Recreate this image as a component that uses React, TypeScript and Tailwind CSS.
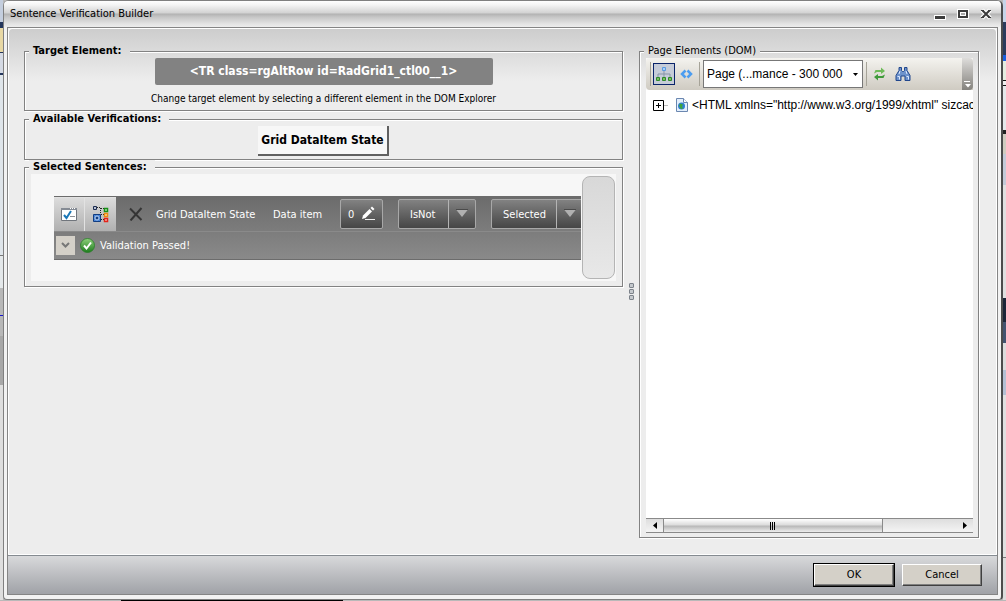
import { useState } from "react";
import type { ReactNode } from "react";
import clsx from "clsx";

function Group({
  title,
  legendClass = "pr-2 font-bold",
  className,
  children,
}: {
  title: string;
  legendClass?: string;
  className?: string;
  children: ReactNode;
}) {
  return (
    <fieldset
      className={clsx(
        "min-w-0 border border-[#828282] shadow-[1px_1px_0_#fff,inset_1px_1px_0_#fff]",
        className
      )}
    >
      <legend className={clsx("ml-1 bg-[#ededed] pl-1 text-[11px] leading-[14px]", legendClass)}>
        {title}
      </legend>
      {children}
    </fieldset>
  );
}

function TitleBar() {
  const button = "flex h-3 w-3 items-center justify-center";
  return (
    <header className="flex h-[26px] shrink-0 items-center justify-between rounded-t bg-[linear-gradient(#fff_0px,#f4f4f4_4px,#d2d2d2_12px,#b2b2b2_13px,#c6c6c6_16px,#e4e4e4_23px,#ededed_26px)] pr-[9px] pl-[6px]">
      <h1 className="pt-px text-[11px]">Sentence Verification Builder</h1>
      <div className="flex gap-[11px]">
        <button type="button" aria-label="Minimize" className={button}>
          <svg width="12" height="12" viewBox="0 0 12 12">
            <path d="M0 7h12v5H0z" fill="#fff" />
            <path d="M1 8h10v3H1z" fill="#3c3c3c" />
          </svg>
        </button>
        <button type="button" aria-label="Maximize" className={button}>
          <svg width="12" height="12" viewBox="0 0 12 12">
            <path d="M0 1h12v10H0z" fill="#fff" />
            <path d="M1 2h10v8H1z" fill="#3c3c3c" />
            <path d="M3 4h6v4H3z" fill="#fff" />
            <path d="M4 5h4v2H4z" fill="#aaa" />
          </svg>
        </button>
        <button type="button" aria-label="Close" className={button}>
          <svg width="12" height="12" viewBox="0 0 12 12">
            <path d="M2 2l8 8m0-8l-8 8" stroke="#fff" strokeWidth="4.500" />
            <path d="M2.500 2.500l7 7m0-7l-7 7" stroke="#3c3c3c" strokeWidth="2" />
            <path d="M1 2.500h3m4 0h3M1 9.500h3m4 0h3" stroke="#3c3c3c" />
          </svg>
        </button>
      </div>
    </header>
  );
}

function CheckWindowIcon() {
  return (
    <svg width="18" height="14" viewBox="0 0 18 14">
      <path d="M1.500 1.500h15v12h-15z" fill="#fff" stroke="#70757c" />
      <path d="M1 1h16v2H1z" fill="#858b94" />
      <path d="M10 1.500h1m1 0h1m1 0h1" stroke="#fff" />
      <path d="M4 8l2.500 3L11 4" fill="none" stroke="#1b78b8" strokeWidth="2" />
      <path d="M10 9.500h5" stroke="#8a8f96" />
    </svg>
  );
}

function BlocksIcon() {
  return (
    <svg width="17" height="18" viewBox="0 0 17 18">
      <path
        d="M5 2.500h3M8.500 3v5M9 3.500h3M9 9.500h3M9 14.500h3"
        stroke="#222"
        strokeDasharray="1 1"
        fill="none"
      />
      <path d="M1.500 1.500h3v3h-3z" fill="#b9c2d4" stroke="#1c2c50" />
      <path d="M1.500 9.500h7v7h-7z" fill="#4a86d8" stroke="#123d80" />
      <circle cx="5" cy="13" r="2" fill="#123d80" stroke="#bcd4f4" />
      <path d="M12.500 3.500h3v3h-3z" fill="#d4ecc8" stroke="#159015" strokeWidth="1.500" />
      <path d="M12.500 8.500h3v3h-3z" fill="#fce2b8" stroke="#ee8a10" strokeWidth="1.500" />
      <path d="M12.500 13.500h3v3h-3z" fill="#fbc9c4" stroke="#e2231a" strokeWidth="1.500" />
    </svg>
  );
}

function ToolSelect({
  label,
  options,
  className,
}: {
  label: string;
  options: string[];
  className: string;
}) {
  return (
    <div
      className={clsx(
        "relative flex h-[30px] shrink-0 rounded-xs border border-[#a8a8a8] bg-linear-to-b from-[#828282] to-[#464646]",
        className
      )}
    >
      <select
        aria-label={label}
        className="w-full appearance-none pt-1 pl-[11px] text-[11px] text-white outline-none"
      >
        {options.map((option) => (
          <option key={option}>{option}</option>
        ))}
      </select>
      <span className="pointer-events-none absolute inset-y-0 right-0 flex w-[27px] items-start justify-center border-l border-[#b4b4b4] pt-[9px]">
        <svg width="12" height="9" viewBox="0 0 12 9">
          <path d="M0 .5h12L6 8z" fill="#b0b0b0" />
          <path d="M0 .5h12" stroke="#4a4a4a" />
        </svg>
      </span>
    </div>
  );
}

function Sentence() {
  const tile =
    "flex h-full w-[31px] shrink-0 items-center justify-center border-t border-[#e2e2e2] bg-linear-to-b from-[#dcdcdc] to-[#b0b0b0]";
  return (
    <div className="min-w-0 flex-1 self-center overflow-hidden border-y border-[#6c6c6c] bg-linear-to-b from-[#6c6c6c] to-[#8a8a8a] text-[11px] text-white">
      <div className="flex h-[35px] items-center border-b border-[#8a8a8a]">
        <button type="button" aria-label="Verification" className={clsx(tile, "border-r")}>
          <CheckWindowIcon />
        </button>
        <button type="button" aria-label="Element" className={tile}>
          <BlocksIcon />
        </button>
        <button type="button" aria-label="Remove" className="ml-[13px] shrink-0">
          <svg width="14" height="14" viewBox="0 0 14 14">
            <path d="M1 1.500L12.500 13M12.500 1L1.500 13.500" stroke="#353535" strokeWidth="2" />
          </svg>
        </button>
        <span className="ml-[13px] w-[117px] shrink-0 pt-1 whitespace-nowrap">
          Grid DataItem State
        </span>
        <span className="w-[67px] shrink-0 pt-1 whitespace-nowrap">Data item</span>
        <button
          type="button"
          className="flex h-[30px] w-[43px] shrink-0 items-center justify-between rounded-xs border border-[#a8a8a8] bg-linear-to-b from-[#828282] to-[#464646] px-[7px]"
        >
          <span className="pt-1">0</span>
          <svg width="14" height="15" viewBox="0 0 14 15">
            <path d="M1 13l1-3.500L8.500 3 11 5.500 4.500 12z" fill="#fff" />
            <path d="M9.500 2l1.500-1.500L13.500 3 12 4.500z" fill="#fff" />
            <path d="M4 13.500h10" stroke="#eee" />
          </svg>
        </button>
        <ToolSelect label="Operator" options={["IsNot", "Is"]} className="ml-[15px] w-[78px]" />
        <ToolSelect label="State" options={["Selected", "Edited"]} className="ml-[15px] w-[93px]" />
      </div>
      <div className="flex h-[27px] items-center gap-[5px] pl-[2px]">
        <button
          type="button"
          aria-label="Details"
          className="flex h-[19px] w-[19px] items-center justify-center bg-[#d4d0c8]"
        >
          <svg width="9" height="6" viewBox="0 0 9 6">
            <path d="M1 1l3.500 3.500L8 1" fill="none" stroke="#777" strokeWidth="2" />
          </svg>
        </button>
        <svg width="15" height="15" viewBox="0 0 15 15">
          <defs>
            <linearGradient id="pass" x1="0" y1="0" x2="0" y2="1">
              <stop offset="0" stopColor="#8fd07c" />
              <stop offset="1" stopColor="#1d7c1d" />
            </linearGradient>
          </defs>
          <circle cx="7.500" cy="7.500" r="7" fill="url(#pass)" stroke="#2a7d28" strokeWidth=".8" />
          <path d="M4 7.500l2.500 3L11 4.500" fill="none" stroke="#fff" strokeWidth="2" />
        </svg>
        <span className="pt-[3px]">Validation Passed!</span>
      </div>
    </div>
  );
}

function DomToolbar() {
  return (
    <div className="flex h-8 items-center rounded-l bg-linear-to-b from-[#f4f3ef] to-[#cfcbc2] pl-1">
      <span className="h-6 w-px bg-[#a6a398]" />
      <button
        type="button"
        aria-label="Tree view"
        className="ml-[2px] flex h-[22px] w-[22px] shrink-0 items-center justify-center border border-[#0a246a] bg-[#c6ccd8]"
      >
        <svg width="18" height="16" viewBox="0 0 18 16">
          <path d="M9 5v6M3 11V8h12v3" fill="none" stroke="#8795a8" />
          <path d="M7.500 1.500h3v3h-3z" fill="#a8d0fa" stroke="#5a9ae0" />
          <path
            d="M1.500 11.500h3v3h-3zM7.500 11.500h3v3h-3zM13.500 11.500h3v3h-3z"
            fill="#7ac060"
            stroke="#2e8a2a"
          />
        </svg>
      </button>
      <button type="button" aria-label="Markup view" className="ml-[5px]">
        <svg width="13" height="10" viewBox="0 0 13 10">
          <path d="M5.500 1.500L2 5l3.500 3.500M7.500 1.500L11 5 7.500 8.500" fill="none" stroke="#4c9df0" strokeWidth="2.500" />
        </svg>
      </button>
      <span className="ml-[6px] h-6 w-px bg-[#a6a398]" />
      <div className="relative ml-[3px] h-7 w-40 shrink-0">
        <select
          aria-label="Page"
          className="h-full w-full appearance-none border border-[#777] bg-white pr-4 pl-[3px] font-['Liberation_Sans',sans-serif] text-[12px] outline-none"
        >
          <option>Page (...mance - 300 000 </option>
        </select>
        <svg
          width="5"
          height="3"
          viewBox="0 0 5 3"
          className="pointer-events-none absolute top-[13px] right-[5px]"
        >
          <path d="M0 0h5L2.500 3z" />
        </svg>
      </div>
      <span className="ml-[3px] h-6 w-px bg-[#a6a398]" />
      <button type="button" aria-label="Refresh" className="ml-[6px]">
        <svg width="13" height="14" viewBox="0 0 13 14">
          <path d="M1 6.500l1.500-3.500H8V.5L12 4 8 7V5H4z" fill="#6dbb58" />
          <path d="M12 7.500L10.500 11H5v2.500L1 10l4-3v2h4z" fill="#3f9a3a" />
        </svg>
      </button>
      <button type="button" aria-label="Find" className="ml-[9px]">
        <svg width="16" height="14" viewBox="0 0 16 14">
          <path
            d="M4 .5h2.500v3l1 1h1l1-1v-3H12v3l3 5v5h-5V9H6v4.500H1v-5l3-5z"
            fill="#6e93cc"
            stroke="#20468c"
          />
          <path d="M2.500 9.500h2v3m7-3h2v3M5 4L4 7m7-3l1 3" fill="none" stroke="#dce9ff" />
        </svg>
      </button>
      <span className="ml-auto flex h-full w-[11px] items-end justify-center rounded-r bg-linear-to-b from-[#dedddb] to-[#85837e] pb-[2px]">
        <svg width="7" height="7" viewBox="0 0 7 7">
          <path d="M0 .5h6" stroke="#fff" />
          <path d="M1 3h6L4 6.500z" fill="#fff" />
        </svg>
      </span>
    </div>
  );
}

function DomTree() {
  const [open, setOpen] = useState(false);
  return (
    <div className="flex flex-1 items-start overflow-hidden bg-white pt-2 pl-[7px]">
      <button
        type="button"
        aria-label="Expand"
        aria-expanded={open}
        onClick={() => setOpen(!open)}
        className="mt-[2px] shrink-0"
      >
        <svg width="15" height="11" viewBox="0 0 15 11">
          <path d="M.5.5h10v10H.5z" fill="#fff" stroke="#000" />
          <path d={open ? "M3 5.500h5" : "M3 5.500h5M5.500 3v5"} stroke="#000" />
          <path d="M11 5.500h4" stroke="#bbb" />
        </svg>
      </button>
      <svg width="12" height="14" viewBox="0 0 12 14" className="ml-2 shrink-0">
        <path d="M.5.5h7l4 4v9H.5z" fill="#e3effc" stroke="#6b87b0" />
        <path d="M7.500.5v4h4" fill="#fff" stroke="#6b87b0" />
        <circle cx="5.500" cy="8" r="3.500" fill="#2f7fd0" />
        <path d="M4 5.500l3 1-1 2 1 2-2 .5-2-3z" fill="#3ea63a" />
      </svg>
      <span className="ml-1 font-['Liberation_Sans',sans-serif] text-[12px] leading-[15px] whitespace-nowrap">
        {'<HTML xmlns="http://www.w3.org/1999/xhtml" sizcac'}
      </span>
    </div>
  );
}

function HorizontalScrollBar() {
  return (
    <div className="flex h-[15px] shrink-0 border-y border-[#8a8a8a] bg-linear-to-b from-[#dedede] to-[#f4f4f4]">
      <button
        type="button"
        aria-label="Scroll left"
        className="flex w-[17px] items-center justify-center"
      >
        <svg width="4" height="7" viewBox="0 0 4 7">
          <path d="M4 0v7L0 3.500z" />
        </svg>
      </button>
      <div className="flex flex-1">
        <div className="flex w-3/4 items-center justify-center gap-px border-x border-[#8a8a8a] bg-[linear-gradient(#fff,#dcdcdc_45%,#b8b8b8_55%,#eee)]">
          <span className="h-2 w-px bg-black" />
          <span className="h-2 w-px bg-black" />
          <span className="h-2 w-px bg-black" />
        </div>
      </div>
      <button
        type="button"
        aria-label="Scroll right"
        className="flex w-[17px] items-center justify-center"
      >
        <svg width="4" height="7" viewBox="0 0 4 7">
          <path d="M0 0v7l4-3.500z" />
        </svg>
      </button>
    </div>
  );
}

export default function App() {
  const dialogButton =
    "h-[22px] w-20 border border-t-white border-l-white border-r-[#404040] border-b-[#404040] bg-[#d4d0c8] text-[11px] shadow-[inset_-1px_-1px_0_#808080]";
  return (
    <div className="flex h-screen flex-col bg-[#b9b9b9] font-['DejaVu_Sans_Condensed',sans-serif] text-black">
      <div className="flex min-h-0 flex-1">
        {/* whatever lies behind the window on the left */}
        <div className="w-[3px] bg-[linear-gradient(#c4cede_22px,#24365c_22px_28px,#e8d8a4_28px_52px,#24365c_52px_53px,#d5dae4_53px_73px,#24365c_73px_75px,#dfe5ea_75px_255px,#777_255px_256px,#e4e8ea_256px_288px,#b8b8b8_288px_315px,#1616d0_315px_316px,#b8b8b8_316px_336px,#a8a8a8_336px_385px,#dedede_385px)]" />
        <div className="flex min-w-0 flex-1 flex-col rounded-t-md rounded-b border border-r-2 border-[#808080] border-r-[#4c4c4c] bg-[#f2f2f2]">
          <TitleBar />
          <div className="mx-[3px] mb-1 flex min-h-0 flex-1 flex-col border border-[#858585]">
            <main className="flex min-h-0 flex-1 rounded-t-sm border border-white bg-[linear-gradient(#cdcdcd,#ededed_52px)] pt-[15px] pr-[17px] pb-4 pl-[15px]">
              <div className="flex min-w-0 flex-1 flex-col">
                <Group
                  title="Target Element:"
                  legendClass="from-[#d6d6d6] to-[#dfdfdf] bg-linear-to-b pr-2 font-bold"
                  className="mb-px"
                >
                  <div className="flex flex-col items-center pb-[5px]">
                    <div className="h-[27px] w-[338px] rounded-xs bg-[#828282] text-center text-[12px] leading-[27px] font-bold text-white">
                      {"<TR class=rgAltRow id=RadGrid1_ctl00__1>"}
                    </div>
                    <p className="mt-[6px] pt-px text-[10px] leading-[13px]">
                      Change target element by selecting a different element in the DOM Explorer
                    </p>
                  </div>
                </Group>
                <Group title="Available Verifications:">
                  <div className="flex justify-center pb-[3px]">
                    <button
                      type="button"
                      className="h-[30px] border-r-2 border-b-2 border-[#606060] bg-[#f7f7f7] px-[3px] text-[12px] font-bold whitespace-nowrap"
                    >
                      Grid DataItem State
                    </button>
                  </div>
                </Group>
                <Group title="Selected Sentences:">
                  <div className="mx-[6px] mb-[5px] flex h-[107px] bg-[#f7f7f7] pr-px pl-[23px]">
                    <Sentence />
                    <div className="my-[2px] ml-px w-[33px] rounded-lg border border-[#b4b4b4] bg-linear-to-b from-[#d8d8d8] to-[#e8e8e8]" />
                  </div>
                </Group>
              </div>
              <div className="flex w-4 shrink-0 flex-col items-center justify-center gap-px">
                {[0, 1, 2].map((dot) => (
                  <span
                    key={dot}
                    className="h-[5px] w-[5px] rounded-[1px] border-[1px] border-[#7c828a] bg-[#c4c8cc]"
                  />
                ))}
              </div>
              <Group
                title="Page Elements (DOM)"
                legendClass="from-[#d6d6d6] to-[#dfdfdf] bg-linear-to-b pr-1"
                className="flex w-[340px] shrink-0"
              >
                <div className="mr-[5px] mb-1 ml-[6px] flex min-w-0 flex-1 flex-col bg-[#f8f8f8]">
                  <DomToolbar />
                  <DomTree />
                  <HorizontalScrollBar />
                </div>
              </Group>
            </main>
            <footer className="flex h-[39px] shrink-0 items-center justify-end gap-2 border-t border-[#858b91] bg-linear-to-b from-[#d8d9db] to-[#a0a2a7] pr-[15px]">
              <button type="button" className={clsx(dialogButton, "outline outline-black")}>
                OK
              </button>
              <button type="button" className={dialogButton}>
                Cancel
              </button>
            </footer>
          </div>
        </div>
        {/* and on the right */}
        <div className="w-[3px] bg-[linear-gradient(#c6d4e8_22px,#2b3b5c_22px_55px,#1c5fe0_55px_61px,#e4ece0_61px_80px,#111_80px_81px,#eee_81px_85px,#111_85px_86px,#e4e8ea_86px_130px,#222_130px_134px,#d0ccc0_134px_154px,#c3cad8_154px_185px,#e0e0e0_185px_298px,#1c2638_298px_322px,#43536f_322px_343px,#dcdcdc_343px_370px,#b4c0d4_370px_395px,#e0e0e0_395px_557px,#777_557px_558px,#dcdcdc_558px)]" />
      </div>
      <div className="ml-[121px] h-px w-[222px] bg-black" />
    </div>
  );
}
